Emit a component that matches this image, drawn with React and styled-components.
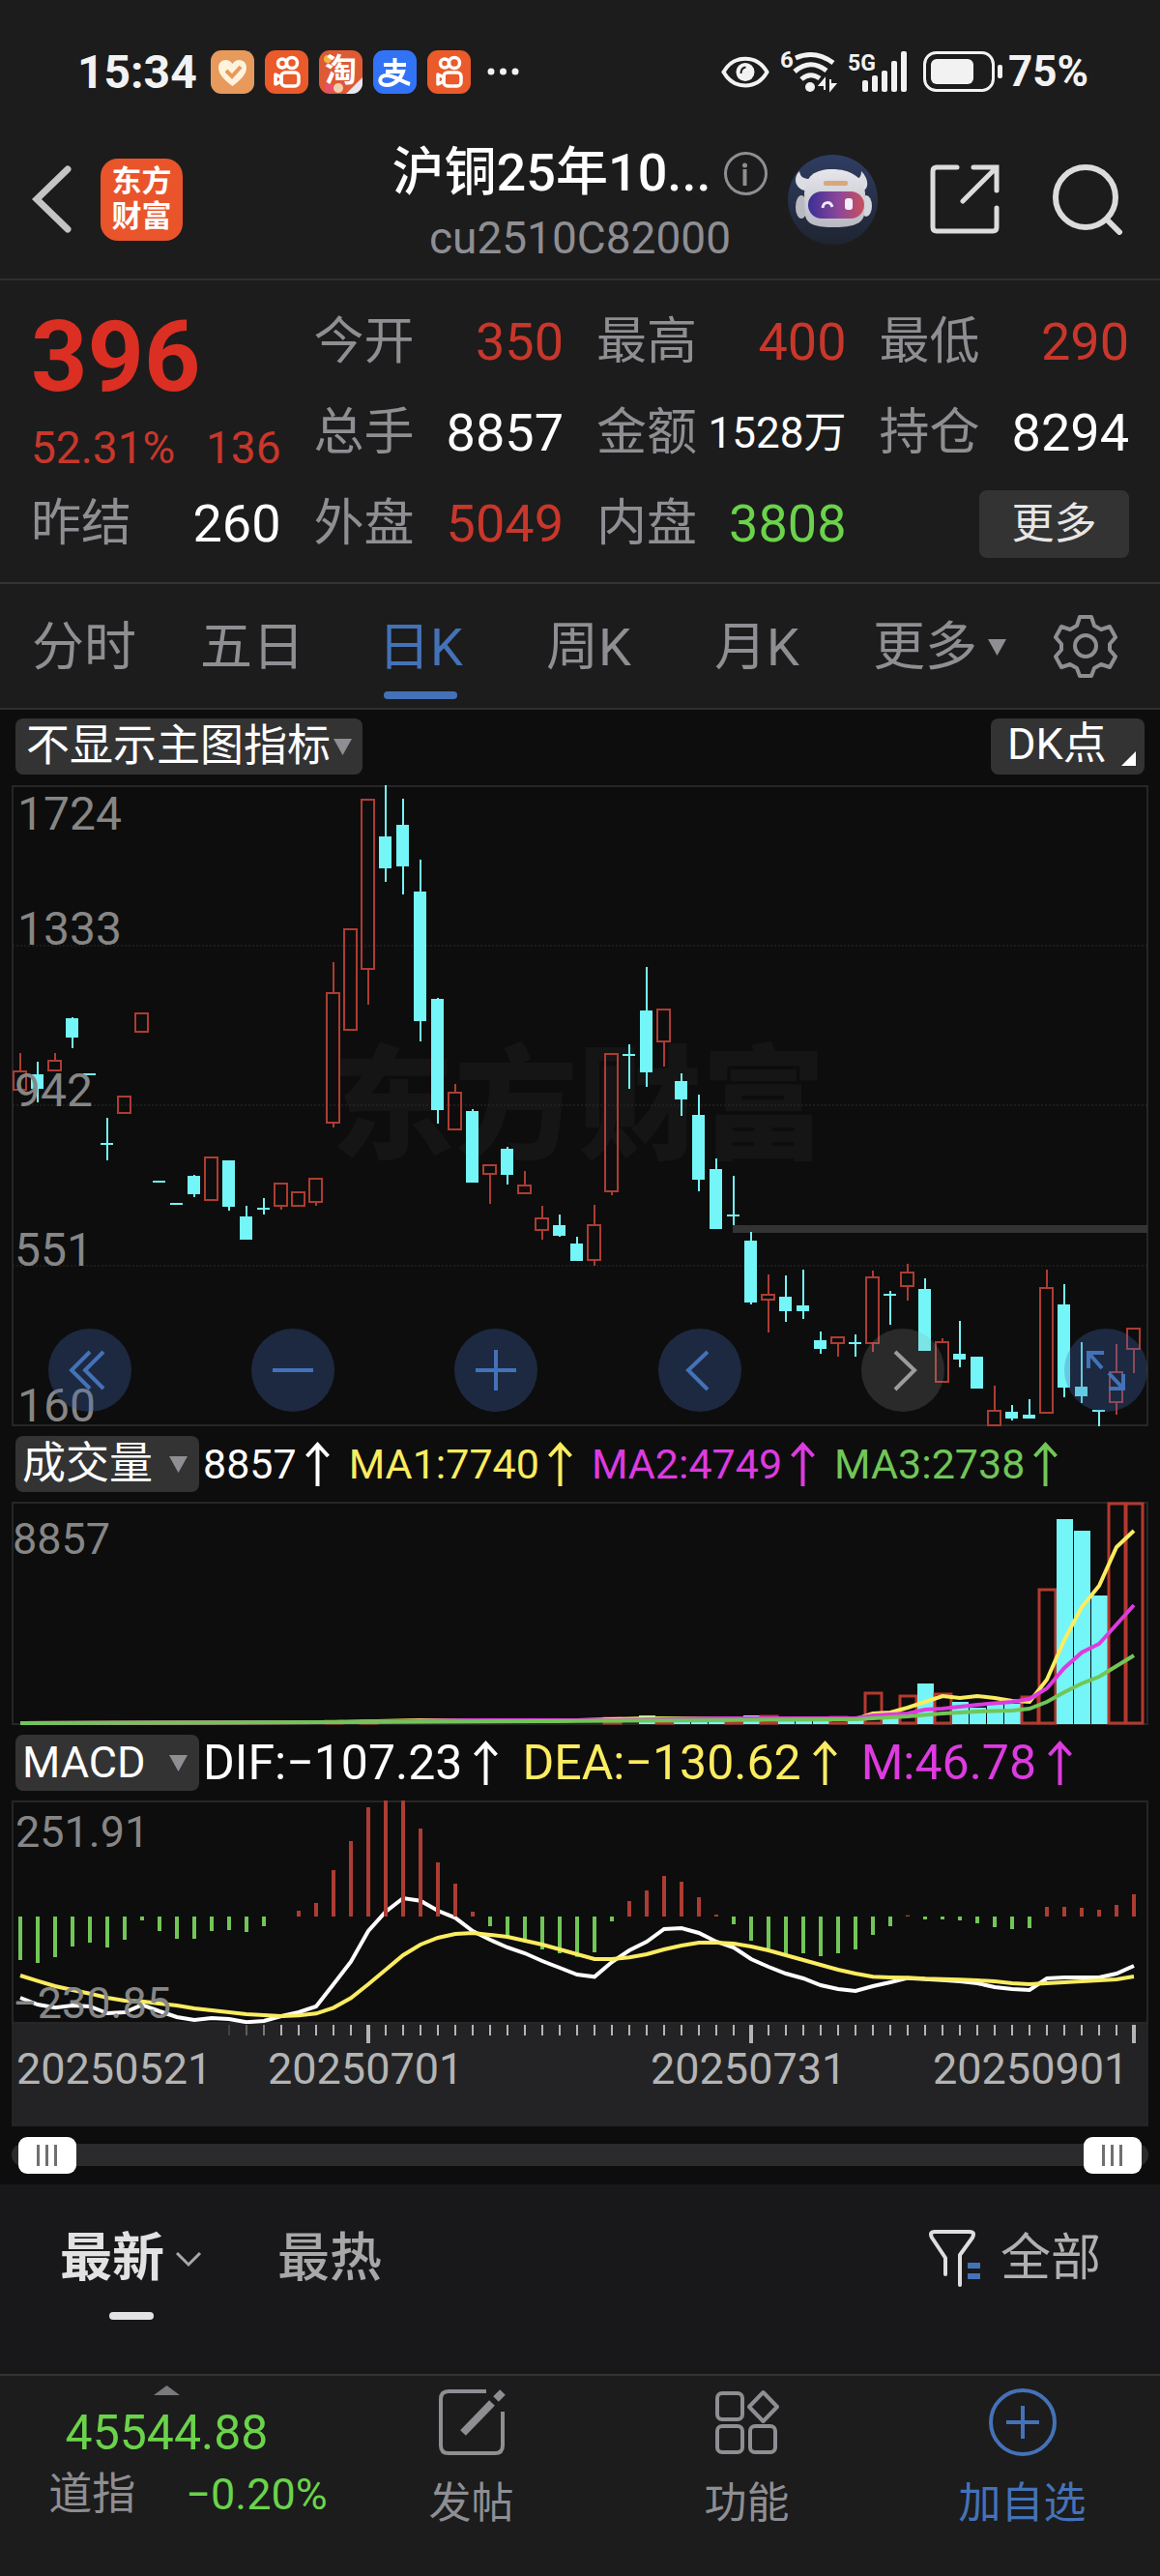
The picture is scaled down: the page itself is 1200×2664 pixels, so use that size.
import React, { useState } from "react";
import styled, { createGlobalStyle } from "styled-components";

const FONT = 'Roboto, "Noto Sans CJK SC", sans-serif';

const GlobalStyle = createGlobalStyle`
  * {
    box-sizing: border-box;
  }

  body {
    margin: 0;
    background: #1c1c1c;
    color: #ffffff;
    font-family: ${FONT};
  }

  button,
  select {
    font-family: inherit;
    color: inherit;
    background: none;
    border: none;
    padding: 0;
    margin: 0;
    cursor: pointer;
  }
`;

const colors = {
  red: "#c8372b",
  rise: "#ad3c33",
  fall: "#74f5f7",
  green: "#6bd34b",
  maGreen: "#71c657",
  yellow: "#fbec60",
  pink: "#dd3be0",
  blue: "#4472b8",
  grey: "#8e8e93",
  grid: "#262626",
};

const quotes = [
  { label: "今开", value: "350", color: colors.red },
  { label: "最高", value: "400", color: colors.red },
  { label: "最低", value: "290", color: colors.red },
  { label: "总手", value: "8857" },
  { label: "金额", value: "1528万", small: true },
  { label: "持仓", value: "8294" },
  { label: "昨结", value: "260" },
  { label: "外盘", value: "5049", color: colors.red },
  { label: "内盘", value: "3808", color: colors.green },
];

const periods = ["分时", "五日", "日K", "周K", "月K"];

// one day per slot
const dayX = (i) => 21 + i * 18;

// [day, direction, high, body top, body bottom, low]
const candles = [
  [0, 1, 1088, 1107, 1126, 1126], [1, 0, 1097, 1110, 1125, 1139], [2, 1, 1088, 1096, 1106, 1106],
  [3, 0, 1051, 1052, 1072, 1083], [4, 0, 1109, 1109, 1111, 1111], [5, 0, 1155, 1181, 1183, 1199],
  [6, 1, 1133, 1133, 1150, 1150], [7, 1, 1047, 1047, 1066, 1066], [8, 0, 1220, 1220, 1222, 1222],
  [9, 0, 1243, 1243, 1245, 1245], [10, 0, 1214, 1215, 1234, 1237], [11, 1, 1195, 1196, 1240, 1240],
  [12, 0, 1199, 1199, 1247, 1251], [13, 0, 1246, 1257, 1281, 1281], [14, 0, 1238, 1248, 1250, 1255],
  [15, 1, 1223, 1223, 1246, 1250], [16, 1, 1232, 1232, 1246, 1246], [17, 1, 1218, 1218, 1242, 1246],
  [18, 1, 994, 1026, 1160, 1165], [19, 1, 960, 960, 1064, 1064], [20, 1, 826, 826, 1001, 1038],
  [21, 0, 811, 864, 897, 911], [22, 0, 825, 852, 895, 924], [23, 0, 888, 921, 1055, 1076],
  [24, 0, 1031, 1032, 1147, 1161], [25, 1, 1120, 1129, 1167, 1167], [26, 0, 1146, 1148, 1222, 1222],
  [27, 1, 1203, 1204, 1213, 1244], [28, 0, 1185, 1187, 1214, 1224], [29, 1, 1210, 1225, 1233, 1233],
  [30, 1, 1246, 1259, 1271, 1281], [31, 0, 1255, 1266, 1277, 1278], [32, 0, 1278, 1285, 1303, 1303],
  [33, 1, 1245, 1266, 1302, 1308], [34, 1, 1088, 1089, 1231, 1235], [35, 0, 1079, 1089, 1091, 1125],
  [36, 0, 999, 1044, 1108, 1123], [37, 1, 1042, 1043, 1076, 1102], [38, 0, 1109, 1117, 1136, 1153],
  [39, 0, 1131, 1152, 1219, 1231], [40, 0, 1197, 1208, 1270, 1270], [41, 0, 1215, 1255, 1257, 1266],
  [42, 0, 1273, 1282, 1346, 1348], [43, 1, 1317, 1338, 1343, 1377], [44, 0, 1318, 1340, 1355, 1366],
  [45, 0, 1312, 1349, 1355, 1363], [46, 0, 1376, 1385, 1394, 1399], [47, 1, 1382, 1382, 1388, 1402],
  [48, 0, 1379, 1387, 1389, 1402], [49, 1, 1313, 1320, 1388, 1397], [50, 0, 1334, 1337, 1339, 1369],
  [51, 1, 1306, 1315, 1329, 1344], [52, 0, 1321, 1332, 1396, 1396], [53, 1, 1383, 1387, 1428, 1428],
  [54, 0, 1365, 1399, 1405, 1413], [55, 0, 1402, 1402, 1435, 1435], [56, 1, 1432, 1458, 1473, 1473],
  [57, 0, 1452, 1459, 1466, 1468], [58, 0, 1446, 1462, 1466, 1466], [59, 1, 1312, 1331, 1460, 1460],
  [60, 0, 1327, 1348, 1434, 1444], [61, 0, 1387, 1433, 1443, 1450], [62, 0, 1457, 1457, 1459, 1474],
  [63, 1, 1389, 1418, 1449, 1462], [64, 1, 1372, 1373, 1394, 1419],
];

// [day, direction, top]
const volumes = [
  [18, 1, 1779], [20, 1, 1779], [34, 1, 1776], [36, 0, 1773], [37, 1, 1779], [38, 0, 1777],
  [39, 0, 1777], [40, 0, 1777], [41, 1, 1777], [42, 0, 1773], [43, 1, 1774], [44, 0, 1777],
  [45, 0, 1777], [46, 0, 1777], [47, 1, 1775], [48, 0, 1777], [49, 1, 1750], [50, 0, 1776],
  [51, 1, 1753], [52, 0, 1740], [53, 1, 1751], [54, 0, 1759], [55, 0, 1765], [56, 0, 1761],
  [57, 0, 1761], [58, 1, 1754], [59, 1, 1643], [60, 0, 1570], [61, 0, 1582], [62, 0, 1649],
  [63, 1, 1554], [64, 1, 1554],
];

const ma1 = [
  [0, 1781], [18, 1780], [23, 1778], [30, 1779], [36, 1776], [48, 1777], [49, 1771], [50, 1770],
  [51, 1765], [52, 1759], [53, 1753], [54, 1755], [55, 1753], [56, 1755], [57, 1758], [58, 1759],
  [59, 1736], [60, 1695], [61, 1661], [62, 1639], [63, 1599], [64, 1582],
];
const ma2 = [
  [0, 1781], [18, 1780], [26, 1778], [34, 1778], [40, 1776], [48, 1776], [49, 1773], [51, 1771],
  [52, 1767], [53, 1766], [55, 1762], [57, 1759], [58, 1756], [59, 1745], [60, 1724], [61, 1708],
  [62, 1699], [63, 1679], [64, 1659],
];
const ma3 = [
  [0, 1781], [18, 1780], [30, 1779], [40, 1778], [48, 1777], [51, 1774], [53, 1771], [55, 1769],
  [57, 1768], [58, 1766], [59, 1759], [60, 1749], [61, 1740], [62, 1733], [63, 1722], [64, 1711],
];

// MACD pane, three steps to a pixel
const macdY = (v) => 1790 + v / 3;
const MACD_ZERO = 573;
const macdBars = [
  708, 717, 699, 666, 654, 669, 645, 585, 618, 642, 642, 618, 615, 621, 603, 573, 555, 531, 429,
  339, 234, 213, 213, 300, 405, 471, 558, 603, 633, 652, 675, 687, 698, 684, 588, 525, 492, 447,
  465, 513, 567, 597, 648, 672, 690, 687, 696, 687, 675, 630, 603, 569, 582, 582, 585, 594, 606,
  612, 609, 543, 543, 546, 552, 537, 504,
];
const dif = [
  825, 846, 856, 849, 852, 873, 870, 847, 867, 885, 894, 888, 891, 901, 897, 882, 870, 852, 783,
  713, 618, 558, 516, 524, 555, 577, 618, 645, 669, 687, 711, 732, 753, 760, 714, 678, 651, 612,
  609, 624, 651, 669, 705, 729, 750, 765, 786, 798, 804, 789, 777, 764, 767, 770, 774, 780, 792,
  798, 801, 765, 762, 762, 762, 750, 726,
];
const dea = [
  756, 773, 789, 801, 812, 825, 834, 836, 843, 849, 858, 864, 870, 876, 879, 882, 880, 874, 856,
  826, 783, 738, 693, 660, 639, 627, 624, 630, 636, 648, 660, 675, 690, 705, 705, 700, 690, 675,
  663, 654, 654, 657, 666, 678, 693, 708, 723, 738, 750, 760, 762, 763, 766, 767, 769, 771, 774,
  780, 783, 780, 777, 774, 771, 768, 759,
];

const toPoints = (list) => list.map(([i, y]) => `${dayX(i)},${y}`).join(" ");
const toMacdPoints = (list) => toPoints(list.map((v, i) => [i, macdY(v)]));

/* ---------- icons ---------- */

const HeartIcon = () => (
  <AppIcon viewBox="0 0 45 45" aria-label="健康">
    <rect width="45" height="45" rx="11" fill="#e79a5c" />
    <path d="M22.500 37C13 30 8 24 8 18c0-8 10-11 14.500-4C27 7 37 10 37 18c0 6-5 12-14.500 19z" fill="#fff3dc" />
    <path d="M16 21l6 6 9-10" fill="none" stroke="#e79a5c" strokeWidth="4" />
  </AppIcon>
);

const KuaishouIcon = () => (
  <AppIcon viewBox="0 0 45 45" aria-label="快手">
    <rect width="45" height="45" rx="11" fill="#ea5a2a" />
    <g fill="none" stroke="#ffffff" strokeWidth="3.500">
      <circle cx="18" cy="13.500" r="4.500" />
      <circle cx="28" cy="13" r="5.500" />
      <rect x="17" y="23" width="18" height="14" rx="4" />
      <path d="M17 28l-6-3v10l6-3z" strokeLinejoin="round" />
    </g>
  </AppIcon>
);

const TaobaoIcon = () => (
  <AppIcon viewBox="0 0 45 45" aria-label="淘宝">
    <rect width="45" height="45" rx="11" fill="#dd5a35" />
    <circle cx="9" cy="9" r="4" fill="#f2b63d" />
    <circle cx="11" cy="39" r="5" fill="#e9506a" />
    <circle cx="20" cy="39" r="5" fill="#f3cfae" />
    <path d="M28 45l17-17v6a11 11 0 0 1-11 11z" fill="#e6e8f2" />
    <text x="6" y="32" fontSize="33" fontWeight="700" fill="#ffffff">淘</text>
  </AppIcon>
);

const AlipayIcon = () => (
  <AppIcon viewBox="0 0 45 45" aria-label="支付宝">
    <rect width="45" height="45" rx="11" fill="#3273f6" />
    <path
      d="M11 15h23M22.500 8v14M13 22h18c-2 7-9 14-17 14-9 0-9-10 0-10 8 0 14 6 24 9"
      fill="none"
      stroke="#ffffff"
      strokeWidth="4"
    />
  </AppIcon>
);

const EyeIcon = () => (
  <svg width="50" height="33" viewBox="0 0 50 33" aria-hidden="true">
    <path d="M2.500 16.500C13-2 37-2 47.500 16.500 37 35 13 35 2.500 16.500z" fill="none" stroke="#f2f2f2" strokeWidth="4" />
    <circle cx="25" cy="16.500" r="9.500" fill="#f2f2f2" />
    <path d="M20.500 18c0-4 2-6 5-6.500" fill="none" stroke="#1c1c1c" strokeWidth="2" />
  </svg>
);

const WifiIcon = () => (
  <StatusIcon width="57" height="46" viewBox="0 0 57 46" aria-label="Wi-Fi 6">
    <text x="-1" y="19" fontSize="24" fontWeight="700" fill="#f2f2f2">6</text>
    <g fill="none" stroke="#f2f2f2" strokeWidth="5">
      <path d="M15 9q20-9 39 5" />
      <path d="M14 23q16-14 33-1" />
      <path d="M21 31q9-8 19-1" />
    </g>
    <circle cx="30" cy="39" r="5" fill="#f2f2f2" />
    <path d="M45 42V31l-5 6h5M51 31v11l5-6h-5" fill="#f2f2f2" stroke="#f2f2f2" strokeWidth="2" />
  </StatusIcon>
);

const SignalIcon = () => (
  <StatusIcon width="62" height="42" viewBox="0 0 62 42" aria-label="5G">
    <text x="0" y="20" fontSize="23" fontWeight="700" fill="#f2f2f2">5G</text>
    <g fill="#f2f2f2">
      <rect x="15" y="30" width="6" height="12" rx="2" />
      <rect x="25" y="25" width="6" height="17" rx="2" />
      <rect x="35" y="20" width="6" height="22" rx="2" />
      <rect x="45" y="10" width="6" height="32" rx="2" />
      <rect x="55" y="0" width="6" height="42" rx="2" />
    </g>
  </StatusIcon>
);

const BatteryIcon = () => (
  <svg width="83" height="42" viewBox="0 0 83 42" aria-hidden="true">
    <rect x="1.500" y="1.500" width="71" height="39" rx="12" fill="none" stroke="#f2f2f2" strokeWidth="3" />
    <rect x="8" y="8" width="44" height="26" rx="6" fill="#f2f2f2" />
    <rect x="77" y="14" width="5" height="14" rx="2" fill="#f2f2f2" />
  </svg>
);

const BackIcon = () => (
  <svg width="44" height="72" viewBox="0 0 44 72" aria-hidden="true">
    <path d="M38 5L6 36l32 31" fill="none" stroke="#c4c4c4" strokeWidth="7" strokeLinecap="round" />
  </svg>
);

const InfoIcon = () => (
  <svg width="45" height="45" viewBox="0 0 45 45" aria-hidden="true">
    <circle cx="22.500" cy="22.500" r="21" fill="none" stroke={colors.grey} strokeWidth="3" />
    <circle cx="21.500" cy="14" r="2.500" fill={colors.grey} />
    <path d="M21.500 18v17" stroke={colors.grey} strokeWidth="4" />
  </svg>
);

const RobotIcon = () => (
  <svg width="93" height="93" viewBox="0 0 93 93" aria-hidden="true">
    <defs>
      <linearGradient id="sky" x1="0" y1="0" x2="0" y2="1">
        <stop offset="0" stopColor="#2f3d63" />
        <stop offset="1" stopColor="#1e2430" />
      </linearGradient>
      <linearGradient id="visor" x1="0" y1="0" x2="1" y2="0">
        <stop offset="0" stopColor="#3a2f96" />
        <stop offset="0.550" stopColor="#8d4799" />
        <stop offset="1" stopColor="#c9505c" />
      </linearGradient>
      <linearGradient id="helmet" x1="0" y1="0" x2="0" y2="1">
        <stop offset="0" stopColor="#e6e6ec" />
        <stop offset="1" stopColor="#b9b9c2" />
      </linearGradient>
    </defs>
    <circle cx="46.500" cy="46.500" r="46.500" fill="url(#sky)" />
    <path d="M12 17c-8 8-3 19 6 20l5-12c-7 0-10-2-11-8zM76 17c8 8 8 18 2 20l-8-12c5 0 6-4 6-8z" fill="#dcdce4" />
    <ellipse cx="14" cy="54" rx="6" ry="12" fill="#b9b9c2" />
    <ellipse cx="81" cy="53" rx="6" ry="11" fill="#d5d5dc" />
    <path d="M17 40C18 22 28 15 46 15s33 8 34 25l-1 22c-2 11-16 13-32 13s-27-2-29-12z" fill="url(#helmet)" />
    <rect x="21" y="38" width="58" height="28" rx="14" fill="url(#visor)" />
    <path d="M36 55c1-7 8-7 10-1" fill="none" stroke="#eceaff" strokeWidth="3" />
    <rect x="59" y="45" width="8" height="12" rx="3" fill="#f4eef8" />
    <rect x="37" y="27" width="25" height="5" rx="2" fill="#d9a77c" />
  </svg>
);

const ShareIcon = () => (
  <svg width="72" height="72" viewBox="0 0 72 72" aria-hidden="true">
    <g fill="none" stroke="#dcdcdc" strokeWidth="5" strokeLinecap="round">
      <path d="M28 3H7q-4 0-4 4v58q0 4 4 4h58q4 0 4-4V45" />
      <path d="M45 3h24v24M68 4L34 38" />
    </g>
  </svg>
);

const SearchIcon = () => (
  <svg width="74" height="74" viewBox="0 0 74 74" aria-hidden="true">
    <g fill="none" stroke="#dcdcdc" strokeWidth="6" strokeLinecap="round">
      <circle cx="35" cy="35" r="31" />
      <path d="M57 58l13 13" />
    </g>
  </svg>
);

const GearIcon = () => (
  <svg width="66" height="66" viewBox="0 0 66 66" aria-hidden="true">
    <g fill="none" stroke={colors.grey} strokeWidth="4" strokeLinejoin="round">
      <path d="M27 3h12l3 9 7 4 9-3 6 11-6 7v6l6 7-6 11-9-3-7 4-3 8H27l-3-8-7-4-9 3-6-11 6-7v-6l-6-7 6-11 9 3 7-4z" />
      <circle cx="33" cy="33" r="11" />
    </g>
  </svg>
);

const UpArrow = ({ color }) => (
  <svg width="25" height="46" viewBox="0 0 25 46" aria-label="上升">
    <path d="M12.500 46V3M1.500 15l11-12 11 12" fill="none" stroke={color} strokeWidth="4" />
  </svg>
);

const Caret = () => (
  <svg width="19" height="17" viewBox="0 0 19 17" aria-hidden="true">
    <path d="M0 0h19L9.500 17z" fill={colors.grey} />
  </svg>
);

const FilterIcon = () => (
  <svg width="54" height="60" viewBox="0 0 54 60" aria-hidden="true">
    <path
      d="M17 46V29L3 8q-3-6 3-6h36q6 0 3 6L32 26v31"
      fill="none"
      stroke="#dedede"
      strokeWidth="4"
      strokeLinecap="round"
      strokeLinejoin="round"
    />
    <path d="M40 37h13M40 48h13" stroke={colors.blue} strokeWidth="6" />
  </svg>
);

const PostIcon = () => (
  <svg width="70" height="70" viewBox="0 0 70 70" aria-hidden="true">
    <g fill="none" stroke={colors.grey} strokeWidth="4">
      <path d="M50 3H11q-8 0-8 8v48q0 8 8 8h48q8 0 8-8V24" />
      <path d="M26 46l30-31" strokeWidth="8" />
      <path d="M60 11l7-7" strokeWidth="8" />
    </g>
  </svg>
);

const FunctionsIcon = () => (
  <svg width="70" height="70" viewBox="0 0 70 70" aria-hidden="true">
    <g fill="none" stroke={colors.grey} strokeWidth="4" strokeLinejoin="round">
      <rect x="4" y="5" width="26" height="27" rx="5" />
      <rect x="4" y="39" width="26" height="27" rx="5" />
      <rect x="38" y="39" width="26" height="27" rx="5" />
      <path d="M51.500 4L66 19 51.500 34 37 19z" />
    </g>
  </svg>
);

const AddIcon = () => (
  <svg width="70" height="70" viewBox="0 0 70 70" aria-hidden="true">
    <g fill="none" stroke={colors.blue} strokeWidth="4">
      <circle cx="35" cy="35" r="33" />
      <path d="M35 18v34M18 35h34" />
    </g>
  </svg>
);

const controls = [
  { label: "最早", d: "M43 24L24 43l19 19M57 24L38 43l19 19" },
  { label: "缩小", d: "M22 43h42" },
  { label: "放大", d: "M22 43h42M43 22v42" },
  { label: "前移", d: "M51 24L31 43l20 20" },
  { label: "后移", d: "M35 24l20 19-20 20", muted: true },
  { label: "全屏", d: "M25 41V25h16M25 25l14 16M61 47v15H46M61 62L46 46" },
];

/* ---------- charts ---------- */

const CandleChart = () => (
  <Plot viewBox="12 811 1176 664" role="img" aria-label="日K线">
    <text x="342" y="1188" fontSize="128" fontWeight="900" fill="#151515">
      东方财富
    </text>
    <rect x="13" y="812" width="1174" height="661" fill="none" stroke={colors.grid} strokeWidth="2" />
    {[977, 1142, 1308].map((y) => (
      <line key={y} x1="13" x2="1187" y1={y} y2={y} stroke="#2c2c2c" strokeDasharray="2 2" />
    ))}
    <rect x="758" y="1266" width="429" height="8" fill="#333333" />
    {candles.map(([i, up, high, top, bottom, low]) => {
      const x = dayX(i);
      const color = up ? colors.rise : colors.fall;
      return (
        <g key={i} stroke={color} strokeWidth="2">
          {high < top && <line x1={x} x2={x} y1={high} y2={top} />}
          {low > bottom && <line x1={x} x2={x} y1={bottom} y2={low} />}
          {up ? (
            <rect x={x - 7} y={top} width="13" height={bottom - top} fill="none" />
          ) : (
            <rect x={x - 7} y={top} width="13" height={bottom - top} fill={color} stroke="none" />
          )}
        </g>
      );
    })}
    <AxisText x="18" y="857">1724</AxisText>
    <AxisText x="18" y="976">1333</AxisText>
    <AxisText x="15" y="1143">942</AxisText>
    <AxisText x="15" y="1308">551</AxisText>
    <AxisText x="18" y="1469">160</AxisText>
  </Plot>
);

const VolumeChart = () => (
  <Plot viewBox="12 1552 1176 232" role="img" aria-label="成交量">
    <rect x="13" y="1553" width="1174" height="229" fill="none" stroke={colors.grid} strokeWidth="2" />
    {volumes.map(([i, up, top]) => {
      const x = dayX(i);
      return up ? (
        <rect key={i} x={x - 8} y={top} width="17" height={1781 - top} fill="none" stroke="#b5392e" strokeWidth="3" />
      ) : (
        <rect key={i} x={x - 8} y={top} width="17" height={1782 - top} fill={colors.fall} />
      );
    })}
    <Line points={toPoints(ma1)} stroke={colors.yellow} />
    <Line points={toPoints(ma2)} stroke={colors.pink} />
    <Line points={toPoints(ma3)} stroke={colors.maGreen} />
    <AxisText x="13" y="1606" $small>8857</AxisText>
  </Plot>
);

const MacdChart = () => (
  <Plot viewBox="12 1861 1176 231" role="img" aria-label="MACD">
    <rect x="13" y="1862" width="1174" height="229" fill="none" stroke={colors.grid} strokeWidth="2" />
    <Line points={toMacdPoints(dif)} stroke="#ffffff" />
    {macdBars.map((v, i) => (
      <line
        key={i}
        x1={dayX(i)}
        x2={dayX(i)}
        y1={macdY(MACD_ZERO)}
        y2={macdY(v)}
        stroke={v < MACD_ZERO ? colors.rise : colors.maGreen}
        strokeWidth="4"
      />
    ))}
    <Line points={toMacdPoints(dea)} stroke={colors.yellow} />
    <AxisText x="16" y="1909" $small>251.91</AxisText>
    <AxisText x="13" y="2086" $small>−230.85</AxisText>
  </Plot>
);

const TimeAxis = () => (
  <Plot viewBox="12 2092 1176 106" role="img" aria-label="日期">
    <rect x="12" y="2092" width="1176" height="106" fill="#232325" />
    {Array.from({ length: 53 }, (_, n) => n + 12).map((i) => {
      const major = i === 20 || i === 42 || i === 64;
      return (
        <line
          key={i}
          x1={dayX(i)}
          x2={dayX(i)}
          y1="2093"
          y2={major ? 2112 : 2104}
          stroke="#b4b4b4"
          strokeWidth={major ? 4 : 2}
          opacity={i < 15 ? (i - 11) * 0.2 : 1}
        />
      );
    })}
    <DateText x="17" y="2154">20250521</DateText>
    <DateText x="277" y="2154">20250701</DateText>
    <DateText x="673" y="2154">20250731</DateText>
    <DateText x="965" y="2154">20250901</DateText>
  </Plot>
);

/* ---------- page ---------- */

const StatusBar = () => (
  <Status>
    <Clock>15:34</Clock>
    <AppIcons>
      <HeartIcon />
      <KuaishouIcon />
      <TaobaoIcon />
      <AlipayIcon />
      <KuaishouIcon />
    </AppIcons>
    <svg width="33" height="8" viewBox="0 0 33 8" aria-hidden="true">
      <g fill="#f2f2f2">
        <circle cx="4" cy="4" r="3.500" />
        <circle cx="16.500" cy="4" r="3.500" />
        <circle cx="29" cy="4" r="3.500" />
      </g>
    </svg>
    <StatusRight>
      <EyeIcon />
      <WifiIcon />
      <SignalIcon />
      <BatteryWrap>
        <BatteryIcon />
        <Battery>75%</Battery>
      </BatteryWrap>
    </StatusRight>
  </Status>
);

const Indicator = ({ name, items, wide }) => (
  <IndicatorRow>
    <Tag>
      <TagSelect aria-label={name} defaultValue={name}>
        <option>{name}</option>
      </TagSelect>
      <Caret />
    </Tag>
    {items.map((item) => (
      <IndicatorItem key={item.text} $color={item.color} $wide={wide}>
        {item.text}
        <UpArrow color={item.color} />
      </IndicatorItem>
    ))}
  </IndicatorRow>
);

const App = () => {
  const [period, setPeriod] = useState("日K");
  const [from, setFrom] = useState(0);
  const [to, setTo] = useState(100);

  return (
    <Page>
      <GlobalStyle />
      <StatusBar />

      <Header>
        <HeaderLeft>
          <IconButton aria-label="返回">
            <BackIcon />
          </IconButton>
          <Logo href="#home">
            东方
            <br />
            财富
          </Logo>
        </HeaderLeft>
        <HeaderCenter>
          <TitleRow>
            <Title>沪铜25年10...</Title>
            <IconButton aria-label="合约信息">
              <InfoIcon />
            </IconButton>
          </TitleRow>
          <Code>cu2510C82000</Code>
        </HeaderCenter>
        <HeaderRight>
          <IconButton aria-label="智能助手">
            <RobotIcon />
          </IconButton>
          <IconButton aria-label="分享">
            <ShareIcon />
          </IconButton>
          <IconButton aria-label="搜索">
            <SearchIcon />
          </IconButton>
        </HeaderRight>
      </Header>

      <Quotes>
        <PriceBox>
          <Price>396</Price>
          <Change>
            <span>52.31%</span>
            <span>136</span>
          </Change>
        </PriceBox>
        {quotes.map((q) => (
          <Quote key={q.label}>
            <QuoteLabel>{q.label}</QuoteLabel>
            <QuoteValue $color={q.color} $small={q.small}>
              {q.value}
            </QuoteValue>
          </Quote>
        ))}
        <MoreCell>
          <MoreButton>更多</MoreButton>
        </MoreCell>
      </Quotes>

      <Tabs>
        {periods.map((p) => (
          <Tab key={p} $active={p === period} onClick={() => setPeriod(p)}>
            {p}
          </Tab>
        ))}
        <MoreTab>
          更多
          <Caret />
        </MoreTab>
        <SettingsButton aria-label="设置">
          <GearIcon />
        </SettingsButton>
      </Tabs>

      <Charts>
        <ChartBar>
          <Tag $roomy>
            <TagSelect aria-label="主图指标" defaultValue="none">
              <option value="none">不显示主图指标</option>
            </TagSelect>
            <Caret />
          </Tag>
          <DkButton>
            DK点
            <svg width="15" height="15" viewBox="0 0 15 15" aria-hidden="true">
              <path d="M15 0v15H0z" fill="#ffffff" />
            </svg>
          </DkButton>
        </ChartBar>

        <CandleArea>
          <CandleChart />
          <Controls>
            {controls.map((c) => (
              <Control key={c.label} aria-label={c.label} $muted={c.muted}>
                <svg width="86" height="86" viewBox="0 0 86 86" aria-hidden="true">
                  <path d={c.d} fill="none" stroke={c.muted ? "#9c9c9c" : colors.blue} strokeWidth="4" />
                </svg>
              </Control>
            ))}
          </Controls>
        </CandleArea>

        <Indicator
          name="成交量"
          items={[
            { text: "8857", color: "#ffffff" },
            { text: "MA1:7740", color: colors.yellow },
            { text: "MA2:4749", color: colors.pink },
            { text: "MA3:2738", color: colors.maGreen },
          ]}
        />
        <VolumeChart />

        <Indicator
          wide
          name="MACD"
          items={[
            { text: "DIF:−107.23", color: "#ffffff" },
            { text: "DEA:−130.62", color: colors.yellow },
            { text: "M:46.78", color: colors.pink },
          ]}
        />
        <MacdChart />
        <TimeAxis />

        <RangeArea>
          <RangeTrack>
            <Range
              type="range"
              aria-label="开始日期"
              value={from}
              onChange={(e) => setFrom(Math.min(Number(e.target.value), to))}
            />
            <Range
              type="range"
              aria-label="结束日期"
              value={to}
              onChange={(e) => setTo(Math.max(Number(e.target.value), from))}
            />
          </RangeTrack>
        </RangeArea>
      </Charts>

      <Comments>
        <CommentTab $active>
          最新
          <svg width="28" height="17" viewBox="0 0 28 17" aria-hidden="true">
            <path d="M2 2l12 12L26 2" fill="none" stroke="#a8a8a8" strokeWidth="3" />
          </svg>
        </CommentTab>
        <CommentTab>最热</CommentTab>
        <FilterButton>
          <FilterIcon />
          全部
        </FilterButton>
      </Comments>

      <BottomBar>
        <IndexBox href="#index">
          <svg width="27" height="10" viewBox="0 0 27 10" aria-hidden="true">
            <path d="M0 10L13.500 0 27 10z" fill="#7a7a7d" />
          </svg>
          <IndexValue>45544.88</IndexValue>
          <IndexRow>
            <span>道指</span>
            <IndexChange>−0.20%</IndexChange>
          </IndexRow>
        </IndexBox>
        <BottomButton>
          <PostIcon />
          发帖
        </BottomButton>
        <BottomButton>
          <FunctionsIcon />
          功能
        </BottomButton>
        <BottomButton $accent>
          <AddIcon />
          加自选
        </BottomButton>
      </BottomBar>
    </Page>
  );
};

export default App;

const Page = styled.main`
  display: flex;
  flex-direction: column;
  background: #1c1c1c;
`;

const Status = styled.div`
  display: flex;
  align-items: center;
  height: 148px;
  padding: 0 74px 0 80px;
  color: #f2f2f2;
`;

const Clock = styled.span`
  font-size: 48px;
  font-weight: 700;
`;

const AppIcons = styled.div`
  display: flex;
  gap: 11px;
  margin: 0 17px 0 14px;
`;

const AppIcon = styled.svg`
  width: 45px;
  height: 45px;
`;

const StatusIcon = styled.svg`
  overflow: visible;
`;

const StatusRight = styled.div`
  display: flex;
  align-items: center;
  gap: 12px;
  margin-left: auto;
`;

const BatteryWrap = styled.div`
  display: flex;
  align-items: center;
  gap: 5px;
  margin-left: 4px;
`;

const Battery = styled.span`
  font-size: 44px;
  font-weight: 700;
`;

const Header = styled.header`
  display: grid;
  grid-template-columns: 1fr auto 1fr;
  height: 142px;
  border-bottom: 2px solid #2e2e2e;
`;

const HeaderLeft = styled.div`
  display: flex;
  align-items: center;
  gap: 28px;
  height: 116px;
  padding-left: 32px;
`;

const IconButton = styled.button`
  display: flex;
`;

const Logo = styled.a`
  display: flex;
  flex-direction: column;
  justify-content: center;
  width: 85px;
  height: 85px;
  border-radius: 18px;
  background: #e9542b;
  color: #ffffff;
  font-size: 31px;
  line-height: 36px;
  font-weight: 700;
  text-align: center;
  text-decoration: none;
`;

const HeaderCenter = styled.div`
  display: flex;
  flex-direction: column;
  align-items: center;
`;

const TitleRow = styled.div`
  display: flex;
  align-items: center;
  gap: 14px;
  height: 62px;
`;

const Title = styled.h1`
  margin: 0;
  font-size: 54px;
  line-height: 62px;
  font-weight: 500;
`;

const Code = styled.div`
  color: ${colors.grey};
  font-size: 46px;
  line-height: 72px;
`;

const HeaderRight = styled.div`
  display: flex;
  align-items: center;
  justify-content: flex-end;
  height: 116px;
  padding-right: 38px;

  ${IconButton} + ${IconButton} {
    margin-left: 54px;
  }
`;

const Quotes = styled.section`
  display: grid;
  grid-template-columns: repeat(4, 1fr);
  grid-auto-rows: 94px;
  column-gap: 34px;
  padding: 17px 32px 13px;
  border-bottom: 2px solid #333333;
`;

const PriceBox = styled.div`
  display: flex;
  flex-direction: column;
  grid-row: span 2;
`;

const Price = styled.strong`
  color: #da2f22;
  font-size: 102px;
  line-height: 124px;
  font-weight: 700;
`;

const Change = styled.div`
  display: flex;
  justify-content: space-between;
  color: ${colors.red};
  font-size: 46px;
  line-height: 64px;
`;

const Quote = styled.div`
  display: flex;
  align-items: center;
  justify-content: space-between;
  white-space: nowrap;
`;

const QuoteLabel = styled.span`
  color: ${colors.grey};
  font-size: 52px;
  line-height: 94px;
`;

const QuoteValue = styled.span`
  color: ${(props) => props.$color || "#ffffff"};
  font-size: ${(props) => (props.$small ? "44px" : "54px")};
  line-height: 94px;
`;

const MoreCell = styled.div`
  display: flex;
  align-items: center;
  justify-content: flex-end;
`;

const MoreButton = styled.button`
  width: 155px;
  height: 70px;
  border-radius: 8px;
  background: #333333;
  color: #e6e6e6;
  font-size: 44px;
  line-height: 60px;
`;

const Tabs = styled.nav`
  display: grid;
  grid-template-columns: repeat(5, 174fr) 204fr 126fr;
  height: 130px;
  border-bottom: 2px solid #2e2e2e;
`;

const Tab = styled.button`
  position: relative;
  padding-top: 3px;
  color: ${(props) => (props.$active ? colors.blue : colors.grey)};
  font-size: 54px;
  line-height: 125px;

  &::after {
    content: "";
    display: ${(props) => (props.$active ? "block" : "none")};
    position: absolute;
    left: calc(50% - 38px);
    bottom: 9px;
    width: 76px;
    height: 8px;
    border-radius: 4px;
    background: ${colors.blue};
  }
`;

const MoreTab = styled(Tab)`
  display: flex;
  align-items: center;
  justify-content: center;
  gap: 11px;
`;

const SettingsButton = styled.button`
  display: flex;
  align-items: center;
  justify-content: flex-end;
  padding-right: 44px;
`;

const Charts = styled.section`
  padding: 0 12px;
  background: #0d0d0d;
`;

const ChartBar = styled.div`
  display: flex;
  justify-content: space-between;
  align-items: flex-start;
  height: 78px;
  padding: 9px 4px 0;
`;

const Tag = styled.span`
  display: inline-flex;
  align-items: center;
  justify-content: space-between;
  gap: 2px;
  flex: none;
  width: ${(props) => (props.$roomy ? "auto" : "190px")};
  height: 58px;
  padding: 0 ${(props) => (props.$roomy ? "11px" : "12px")} 0
    ${(props) => (props.$roomy ? "11px" : "7px")};
  border-radius: 8px;
  background: #333333;
`;

const TagSelect = styled.select`
  appearance: none;
  font-size: 45px;
  line-height: 58px;
  height: 58px;
`;

const DkButton = styled.button`
  display: flex;
  align-items: flex-end;
  justify-content: space-between;
  width: 159px;
  height: 58px;
  padding: 0 9px 9px 17px;
  border-radius: 8px;
  background: #333333;
  font-size: 45px;
  line-height: 45px;
`;

const CandleArea = styled.div`
  position: relative;
`;

const Plot = styled.svg`
  display: block;
  width: 100%;
  height: auto;
  overflow: visible;
`;

const Line = styled.polyline`
  fill: none;
  stroke-width: 4px;
`;

const AxisText = styled.text`
  fill: #868686;
  font-size: ${(props) => (props.$small ? "45px" : "48px")};
`;

const DateText = styled.text`
  fill: #b4b4b4;
  font-size: 45px;
`;

const Controls = styled.div`
  position: absolute;
  left: 38px;
  right: 1px;
  bottom: 16px;
  display: flex;
  justify-content: space-between;
`;

const Control = styled.button`
  display: flex;
  width: 86px;
  height: 86px;
  border-radius: 50%;
  background: ${(props) =>
    props.$muted ? "rgba(160, 160, 160, 0.2)" : "rgba(66, 108, 180, 0.31)"};
`;

const IndicatorRow = styled.div`
  display: flex;
  align-items: flex-start;
  height: 77px;
  padding: 9px 4px 0;
`;

const IndicatorItem = styled.span`
  display: flex;
  align-items: center;
  gap: ${(props) => (props.$wide ? "12px" : "9px")};
  margin: 0 ${(props) => (props.$wide ? "21px" : "16px")} 0 4px;
  color: ${(props) => props.$color};
  font-size: ${(props) => (props.$wide ? "50px" : "43px")};
  line-height: 58px;
`;

const RangeArea = styled.div`
  padding: 18px 0 19px;
`;

const RangeTrack = styled.div`
  display: grid;
  grid-template-rows: 23px;
  align-items: center;
  padding: 0 7px;
  border-radius: 12px;
  background: #2b2b2d;
`;

const Range = styled.input`
  grid-area: 1 / 1;
  appearance: none;
  width: 100%;
  height: 38px;
  margin: 0;
  background: none;
  pointer-events: none;

  &::-webkit-slider-thumb {
    appearance: none;
    pointer-events: auto;
    width: 60px;
    height: 38px;
    border-radius: 9px;
    background:
      linear-gradient(#707070, #707070) 19px 8px / 3px 22px no-repeat,
      linear-gradient(#707070, #707070) 28px 8px / 3px 22px no-repeat,
      linear-gradient(#707070, #707070) 37px 8px / 3px 22px no-repeat,
      #ffffff;
  }
`;

const Comments = styled.div`
  display: flex;
  align-items: flex-start;
  height: 196px;
  padding: 37px 61px 0 62px;
  background: #18181a;
`;

const CommentTab = styled.button`
  position: relative;
  display: flex;
  align-items: center;
  gap: 11px;
  margin-right: 78px;
  color: ${(props) => (props.$active ? "#e2e2e2" : "#a8a8a8")};
  font-size: 54px;
  line-height: 80px;
  font-weight: ${(props) => (props.$active ? 700 : 500)};

  &::after {
    content: "";
    display: ${(props) => (props.$active ? "block" : "none")};
    position: absolute;
    left: calc(50% - 23px);
    bottom: -23px;
    width: 46px;
    height: 8px;
    border-radius: 4px;
    background: #e2e2e2;
  }
`;

const FilterButton = styled.button`
  display: flex;
  align-items: center;
  gap: 20px;
  margin-left: auto;
  color: #b0b0b0;
  font-size: 52px;
  line-height: 80px;
`;

const BottomBar = styled.footer`
  display: grid;
  grid-template-columns: 345fr repeat(3, 285fr);
  height: 210px;
  border-top: 2px solid #333333;
`;

const IndexBox = styled.a`
  display: flex;
  flex-direction: column;
  align-items: center;
  padding-top: 10px;
  color: ${colors.green};
  text-decoration: none;
`;

const IndexValue = styled.span`
  font-size: 50px;
  line-height: 78px;
`;

const IndexRow = styled.span`
  display: flex;
  gap: 52px;
  padding-left: 44px;
  color: ${colors.grey};
  font-size: 45px;
  line-height: 50px;
`;

const IndexChange = styled.span`
  color: ${colors.green};
`;

const BottomButton = styled.button`
  display: flex;
  flex-direction: column;
  align-items: center;
  gap: 22px;
  padding-top: 13px;
  color: ${(props) => (props.$accent ? colors.blue : colors.grey)};
  font-size: 44px;
  line-height: 54px;
`;
